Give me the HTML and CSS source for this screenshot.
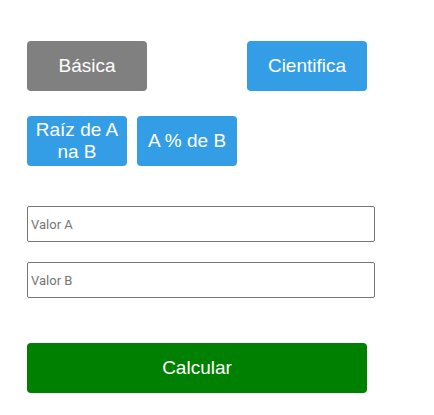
FILE: index.html
```html
<!DOCTYPE html>
<html>
<head>
<meta charset="utf-8">
<link rel="stylesheet" href="styles.css">
</head>
<body>
<div class="calc">
  <div class="row row-modes">
    <button class="btn btn-mode btn-gray">Básica</button>
    <button class="btn btn-mode btn-blue">Cientifica</button>
  </div>
  <div class="row row-ops">
    <button class="btn btn-op btn-blue">Raíz de A na B</button>
    <button class="btn btn-op btn-blue">A % de B</button>
  </div>
  <div class="fields">
    <input class="field" type="text" placeholder="Valor A">
    <input class="field" type="text" placeholder="Valor B">
  </div>
  <button class="btn btn-calc">Calcular</button>
</div>
</body>
</html>
```
FILE: styles.css
```css
html, body {
  margin: 0;
  padding: 0;
  background: #ffffff;
}
.calc {
  padding: 41px 0 0 27px;
  display: flex;
  flex-direction: column;
  align-items: flex-start;
}
.row {
  display: flex;
}
.row-modes {
  gap: 100px;
}
.row-ops {
  gap: 10px;
  margin-top: 25px;
}
.btn {
  border: none;
  border-radius: 4px;
  color: #ffffff;
  font-family: "Liberation Sans", Arial, sans-serif;
  font-size: 19px;
  line-height: 22px;
  height: 50px;
  padding: 0 6px;
  cursor: pointer;
}
.btn-mode {
  width: 120px;
}
.btn-op {
  width: 100px;
}
.btn-gray {
  background: #808080;
}
.btn-blue {
  background: #339ee6;
}
.fields {
  margin-top: 40px;
  display: flex;
  flex-direction: column;
  gap: 20px;
}
.field {
  box-sizing: border-box;
  width: 348px;
  height: 36px;
  margin: 0;
  border: 1px solid #767676;
  border-radius: 2px;
  padding: 0 3px;
  font-family: Roboto, "Liberation Sans", Arial, sans-serif;
  font-size: 13px;
  color: #222;
}
.field::placeholder {
  color: #757575;
}
.btn-calc {
  margin-top: 45px;
  width: 340px;
  background: #008000;
}
```
